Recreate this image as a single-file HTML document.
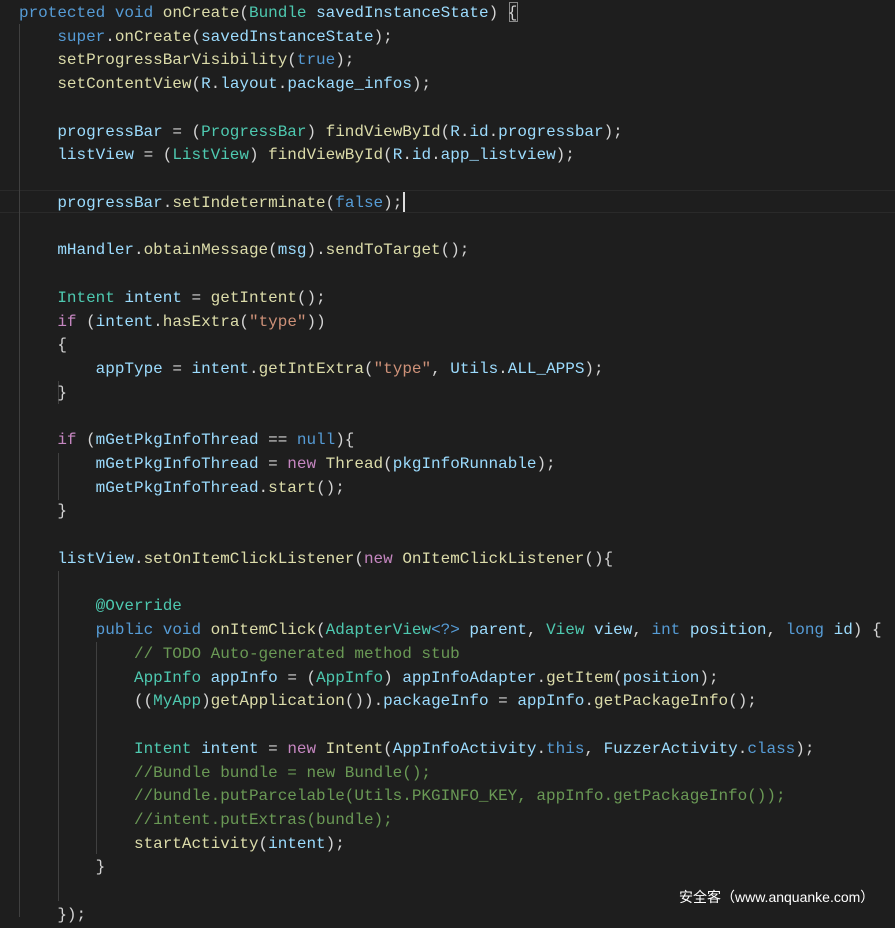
<!DOCTYPE html>
<html><head><meta charset="utf-8"><style>
html,body{margin:0;padding:0;background:#1e1e1e;width:895px;height:917px;overflow:hidden}
pre{position:absolute;left:19px;top:2px;margin:0;font:16px/23.74px "Liberation Mono",monospace;color:#d4d4d4;letter-spacing:-0.02px}
.k{color:#569cd6}.c{color:#c586c0}.f{color:#dcdcaa}.v{color:#9cdcfe}.t{color:#4ec9b0}.s{color:#ce9178}.m{color:#6a9955}
.g{position:absolute;width:1px;background:#404040}
.hl{position:absolute;left:0;top:190px;width:895px;height:23px;border-top:1px solid #2a2a2a;border-bottom:1px solid #2a2a2a;box-sizing:border-box}
.wm{position:absolute;left:679px;top:887px;color:#fff;font:14px "Liberation Sans","Noto Sans CJK SC",sans-serif}
</style></head><body>
<div class="hl"></div>
<div class="g" style="left:19px;top:24px;height:893px"></div>
<div class="g" style="left:58px;top:381px;height:23px"></div>
<div class="g" style="left:58px;top:453px;height:47px"></div>
<div class="g" style="left:58px;top:571px;height:330px"></div>
<div class="g" style="left:96px;top:642px;height:212px"></div>
<div style="position:absolute;left:509px;top:2px;width:9px;height:20px;border:1px solid #888;box-sizing:border-box"></div>
<div style="position:absolute;left:403px;top:192px;width:2px;height:20px;background:#ddd"></div>
<pre><span class="k">protected</span> <span class="k">void</span> <span class="f">onCreate</span>(<span class="t">Bundle</span> <span class="v">savedInstanceState</span>) {
    <span class="k">super</span>.<span class="f">onCreate</span>(<span class="v">savedInstanceState</span>);
    <span class="f">setProgressBarVisibility</span>(<span class="k">true</span>);
    <span class="f">setContentView</span>(<span class="v">R</span>.<span class="v">layout</span>.<span class="v">package_infos</span>);

    <span class="v">progressBar</span> = (<span class="t">ProgressBar</span>) <span class="f">findViewById</span>(<span class="v">R</span>.<span class="v">id</span>.<span class="v">progressbar</span>);
    <span class="v">listView</span> = (<span class="t">ListView</span>) <span class="f">findViewById</span>(<span class="v">R</span>.<span class="v">id</span>.<span class="v">app_listview</span>);

    <span class="v">progressBar</span>.<span class="f">setIndeterminate</span>(<span class="k">false</span>);

    <span class="v">mHandler</span>.<span class="f">obtainMessage</span>(<span class="v">msg</span>).<span class="f">sendToTarget</span>();

    <span class="t">Intent</span> <span class="v">intent</span> = <span class="f">getIntent</span>();
    <span class="c">if</span> (<span class="v">intent</span>.<span class="f">hasExtra</span>(<span class="s">"type"</span>))
    {
        <span class="v">appType</span> = <span class="v">intent</span>.<span class="f">getIntExtra</span>(<span class="s">"type"</span>, <span class="v">Utils</span>.<span class="v">ALL_APPS</span>);
    }

    <span class="c">if</span> (<span class="v">mGetPkgInfoThread</span> == <span class="k">null</span>){
        <span class="v">mGetPkgInfoThread</span> = <span class="c">new</span> <span class="f">Thread</span>(<span class="v">pkgInfoRunnable</span>);
        <span class="v">mGetPkgInfoThread</span>.<span class="f">start</span>();
    }

    <span class="v">listView</span>.<span class="f">setOnItemClickListener</span>(<span class="c">new</span> <span class="f">OnItemClickListener</span>(){

        <span class="t">@Override</span>
        <span class="k">public</span> <span class="k">void</span> <span class="f">onItemClick</span>(<span class="t">AdapterView</span><span class="k">&lt;?&gt;</span> <span class="v">parent</span>, <span class="t">View</span> <span class="v">view</span>, <span class="k">int</span> <span class="v">position</span>, <span class="k">long</span> <span class="v">id</span>) {
            <span class="m">// TODO Auto-generated method stub</span>
            <span class="t">AppInfo</span> <span class="v">appInfo</span> = (<span class="t">AppInfo</span>) <span class="v">appInfoAdapter</span>.<span class="f">getItem</span>(<span class="v">position</span>);
            ((<span class="t">MyApp</span>)<span class="f">getApplication</span>()).<span class="v">packageInfo</span> = <span class="v">appInfo</span>.<span class="f">getPackageInfo</span>();

            <span class="t">Intent</span> <span class="v">intent</span> = <span class="c">new</span> <span class="f">Intent</span>(<span class="v">AppInfoActivity</span>.<span class="k">this</span>, <span class="v">FuzzerActivity</span>.<span class="k">class</span>);
            <span class="m">//Bundle bundle = new Bundle();</span>
            <span class="m">//bundle.putParcelable(Utils.PKGINFO_KEY, appInfo.getPackageInfo());</span>
            <span class="m">//intent.putExtras(bundle);</span>
            <span class="f">startActivity</span>(<span class="v">intent</span>);
        }

    });</pre>
<div class="wm">安全客（www.anquanke.com）</div>
</body></html>
